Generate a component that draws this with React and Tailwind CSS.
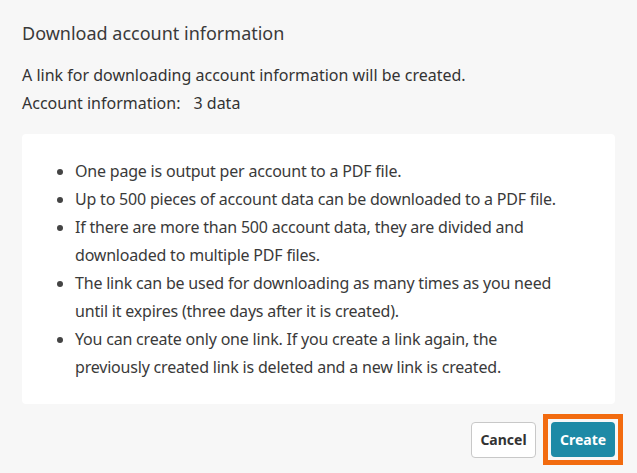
import React from "react";

const notes = [
  "One page is output per account to a PDF file.",
  "Up to 500 pieces of account data can be downloaded to a PDF file.",
  "If there are more than 500 account data, they are divided and downloaded to multiple PDF files.",
  "The link can be used for downloading as many times as you need until it expires (three days after it is created).",
  "You can create only one link. If you create a link again, the previously created link is deleted and a new link is created.",
];

export default function App() {
  return (
    <div
      className="w-[637px] h-[473px] bg-[#f7f7f7] text-[#333] overflow-hidden"
      style={{ fontFamily: '"Noto Sans", "Open Sans", sans-serif' }}
    >
      <div className="px-[22px] pt-[20px]">
        <h1 className="text-[18px] leading-[26px] text-[#3a3a3a]">Download account information</h1>

        <div className="mt-[15px] text-[16px] leading-[28px]">
          <p>A link for downloading account information will be created.</p>
          <p>
            Account information:<span className="ml-[13px]">3 data</span>
          </p>
        </div>

        <div className="mt-[17px] bg-white rounded-[4px] pl-[28px] pr-[42px] pt-[23px] pb-[23px]">
          <ul className="list-disc pl-[25px] text-[16px] leading-[28px] text-[#3a3a3a] tracking-[-0.2px] marker:text-[#444]">
            {notes.map((n, i) => (
              <li key={i}>{n}</li>
            ))}
          </ul>
        </div>
      </div>

      <div className="flex justify-end items-center gap-[7px] mt-[10px] pr-[14px]">
        <button className="h-[36px] w-[65px] border border-[#c8c8c8] rounded-[4px] bg-white text-[14px] font-bold text-[#333]">
          Cancel
        </button>
        <div className="border-[5px] border-[#f26b0f] p-[3px]">
          <button className="h-[35px] w-[64px] rounded-[4px] bg-[#1d8aa6] text-white text-[14px] font-bold">
            Create
          </button>
        </div>
      </div>
    </div>
  );
}
